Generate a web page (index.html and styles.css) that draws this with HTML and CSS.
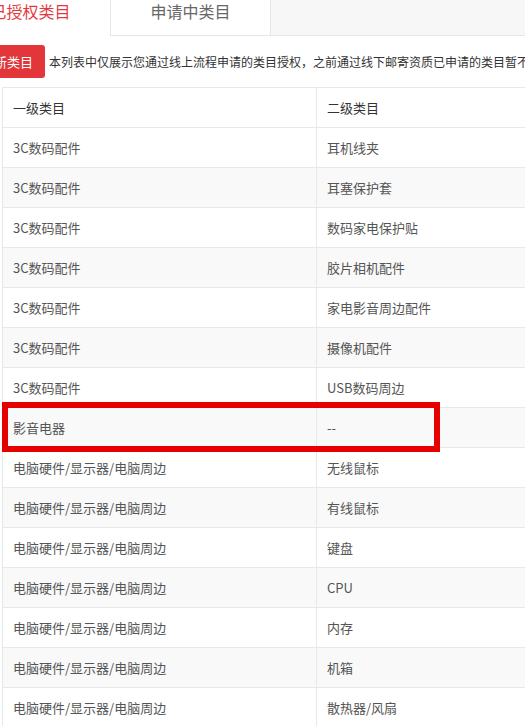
FILE: index.html
```html
<!DOCTYPE html>
<html lang="zh-CN">
<head>
<meta charset="utf-8">
<title>类目授权</title>
<link rel="stylesheet" href="styles.css">
</head>
<body>
<div class="page">
  <div class="tabs">
    <div class="tab tab-active">已授权类目</div>
    <div class="tab">申请中类目</div>
    <div class="tab-fill"></div>
  </div>
  <div class="toolbar">
    <button class="btn-new">新类目</button>
    <span class="notice">本列表中仅展示您通过线上流程申请的类目授权，之前通过线下邮寄资质已申请的类目暂不</span>
  </div>
  <table class="cat-table">
    <thead>
      <tr><th class="col1">一级类目</th><th class="col2">二级类目</th></tr>
    </thead>
    <tbody>
      <tr><td>3C数码配件</td><td>耳机线夹</td></tr>
      <tr class="alt"><td>3C数码配件</td><td>耳塞保护套</td></tr>
      <tr><td>3C数码配件</td><td>数码家电保护贴</td></tr>
      <tr class="alt"><td>3C数码配件</td><td>胶片相机配件</td></tr>
      <tr><td>3C数码配件</td><td>家电影音周边配件</td></tr>
      <tr class="alt"><td>3C数码配件</td><td>摄像机配件</td></tr>
      <tr><td>3C数码配件</td><td>USB数码周边</td></tr>
      <tr class="alt"><td>影音电器</td><td>--</td></tr>
      <tr><td>电脑硬件/显示器/电脑周边</td><td>无线鼠标</td></tr>
      <tr class="alt"><td>电脑硬件/显示器/电脑周边</td><td>有线鼠标</td></tr>
      <tr><td>电脑硬件/显示器/电脑周边</td><td>键盘</td></tr>
      <tr class="alt"><td>电脑硬件/显示器/电脑周边</td><td>CPU</td></tr>
      <tr><td>电脑硬件/显示器/电脑周边</td><td>内存</td></tr>
      <tr class="alt"><td>电脑硬件/显示器/电脑周边</td><td>机箱</td></tr>
      <tr><td>电脑硬件/显示器/电脑周边</td><td>散热器/风扇</td></tr>
    </tbody>
  </table>
  <div class="highlight-box"></div>
</div>
</body>
</html>
```

FILE: styles.css
```css
html, body {
  margin: 0;
  padding: 0;
  background: #fff;
  overflow: hidden;
}

body {
  font-family: "Noto Sans CJK SC", "Noto Sans", sans-serif;
  color: #333;
}

.page {
  position: relative;
  width: 525px;
  height: 726px;
  overflow: hidden;
}

.tabs {
  display: flex;
  height: 36px;
  margin-left: -50px;
}

.tab {
  box-sizing: border-box;
  width: 161px;
  height: 36px;
  line-height: 22px;
  text-align: center;
  font-size: 16px;
  color: #666;
  background: #fff;
  border-left: 1px solid #e6e6e6;
  border-right: 1px solid #e6e6e6;
  border-bottom: 1px solid #e6e6e6;
  margin-left: -1px;
}

.tab-active {
  color: #e4393c;
  border-bottom-color: #fff;
  margin-left: 0;
  border-left: none;
  border-right: none;
}

.tab-fill {
  flex: 1;
  height: 36px;
  box-sizing: border-box;
  background: #f7f7f7;
  border-bottom: 1px solid #e6e6e6;
}

.toolbar {
  display: flex;
  align-items: center;
  margin-top: 9px;
  height: 33px;
  margin-left: -18px;
  white-space: nowrap;
}

.btn-new {
  box-sizing: border-box;
  height: 33px;
  padding: 0 12px;
  border: none;
  border-radius: 3px;
  background: #e2363b;
  color: #fff;
  font-family: "Noto Sans CJK SC", "Noto Sans", sans-serif;
  font-size: 13px;
  line-height: 33px;
  flex: none;
}

.notice {
  margin-left: 4px;
  font-size: 12px;
  color: #333;
}

.cat-table {
  margin-top: 9px;
  margin-left: 2px;
  width: 760px;
  border-collapse: collapse;
  table-layout: fixed;
  font-size: 13px;
}

.cat-table th,
.cat-table td {
  height: 39px;
  padding: 0 10px;
  text-align: left;
  border: 1px solid #e8e8e8;
  white-space: nowrap;
}

.cat-table th {
  font-weight: normal;
  color: #333;
}

.cat-table td {
  color: #555;
}

.cat-table .col1 {
  width: 293px;
}

.cat-table tr.alt td {
  background: #f9f9f9;
}

.highlight-box {
  position: absolute;
  left: 2px;
  top: 402px;
  width: 438px;
  height: 50px;
  box-sizing: border-box;
  border: 6px solid #e60000;
}
```
